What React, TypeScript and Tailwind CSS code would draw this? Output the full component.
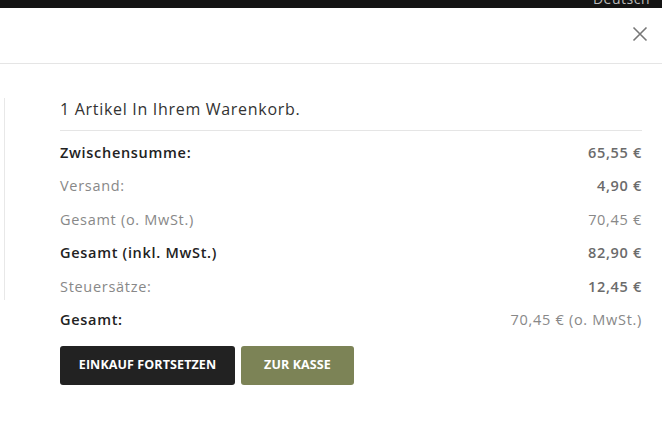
import React from "react";

const rows: { label: string; value: string; labelBold: boolean; valueBold: boolean }[] = [
  { label: "Zwischensumme:", value: "65,55 €", labelBold: true, valueBold: true },
  { label: "Versand:", value: "4,90 €", labelBold: false, valueBold: true },
  { label: "Gesamt (o. MwSt.)", value: "70,45 €", labelBold: false, valueBold: false },
  { label: "Gesamt (inkl. MwSt.)", value: "82,90 €", labelBold: true, valueBold: true },
  { label: "Steuersätze:", value: "12,45 €", labelBold: false, valueBold: true },
  { label: "Gesamt:", value: "70,45 € (o. MwSt.)", labelBold: true, valueBold: false },
];

export default function App() {
  return (
    <div className="w-[662px] h-[427px] bg-white overflow-hidden" style={{ fontFamily: "'Open Sans', sans-serif" }}>
      <div className="h-[8px] bg-[#141414] flex justify-end pr-[12px] overflow-hidden">
        <span className="text-[14px] leading-[14px] text-[#bbb] mt-[-8px] tracking-[0.5px]">Deutsch</span>
      </div>
      <div className="h-[56px] border-b border-[#e5e5e5] flex items-center justify-end pr-[14px]">
        <svg width="16" height="16" viewBox="0 0 16 16" className="mt-[-4px]">
          <path d="M1.5 1.5 L14.5 14.5 M14.5 1.5 L1.5 14.5" stroke="#777" strokeWidth="1.6" />
        </svg>
      </div>
      <div className="flex pt-[34px]">
        <div className="w-[5px] border-r border-[#e8e8e8] h-[202px]" />
        <div className="ml-[55px] w-[582px]">
          <div className="text-[16px] leading-[22px] text-[#333] tracking-[0.7px] pb-[10px] border-b border-[#e5e5e5]">
            1 Artikel In Ihrem Warenkorb.
          </div>
          <div className="pt-[5px]">
            {rows.map((r) => (
              <div key={r.label} className="h-[33.5px] flex items-center justify-between text-[14.5px] tracking-[0.7px]">
                <span className={r.labelBold ? "font-semibold text-[#222]" : "text-[#888]"}>{r.label}</span>
                <span className={r.valueBold ? "font-semibold text-[#6b6b6b]" : "text-[#888]"}>{r.value}</span>
              </div>
            ))}
          </div>
          <div className="flex gap-[6px] mt-[9px]">
            <button className="h-[39px] w-[175px] rounded-[3px] bg-[#222] text-white text-[12.5px] font-bold tracking-[0.1px]">
              EINKAUF FORTSETZEN
            </button>
            <button className="h-[39px] w-[113px] rounded-[3px] bg-[#7c8356] text-white text-[12.5px] font-bold tracking-[0.1px]">
              ZUR KASSE
            </button>
          </div>
        </div>
      </div>
    </div>
  );
}
